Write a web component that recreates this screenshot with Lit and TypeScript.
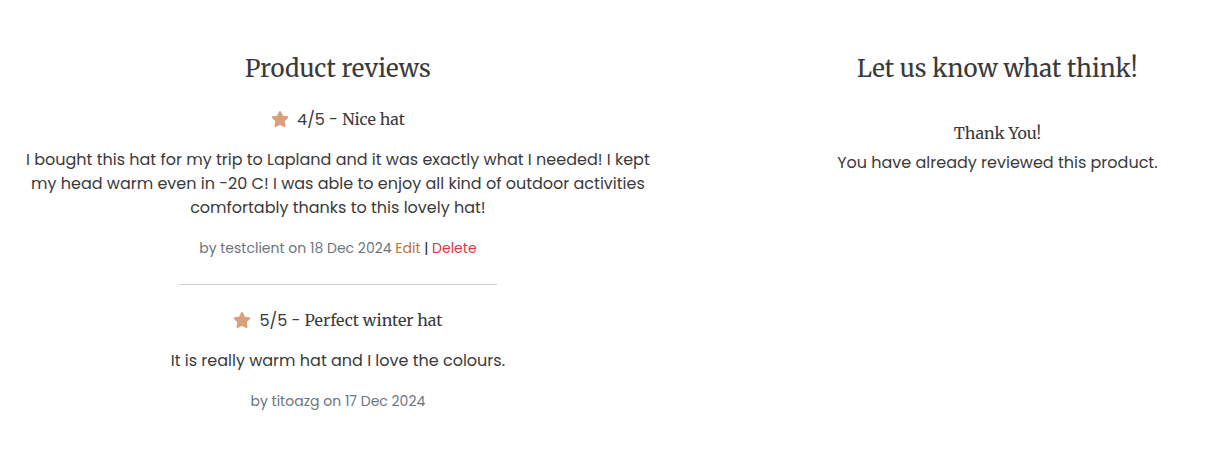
import { LitElement, html, css } from "lit";
import { customElement } from "lit/decorators.js";

interface Review {
  rating: number;
  title: string;
  body: string;
  author: string;
  date: string;
  own: boolean;
}

const reviews: Review[] = [
  {
    rating: 4,
    title: "Nice hat",
    body: "I bought this hat for my trip to Lapland and it was exactly what I needed! I kept my head warm even in -20 C! I was able to enjoy all kind of outdoor activities comfortably thanks to this lovely hat!",
    author: "testclient",
    date: "18 Dec 2024",
    own: true,
  },
  {
    rating: 5,
    title: "Perfect winter hat",
    body: "It is really warm hat and I love the colours.",
    author: "titoazg",
    date: "17 Dec 2024",
    own: false,
  },
];

@customElement("app-root")
export class AppRoot extends LitElement {
  static styles = css`
    :host {
      display: block;
      background: #fff;
      color: #3a3a3a;
      font: 16px/24px Poppins, "Open Sans", sans-serif;
      text-align: center;
    }
    .row {
      display: grid;
      grid-template-columns: 20fr 13fr;
      column-gap: 102px;
      padding: 53px 0 48px;
    }
    .reviews {
      padding: 0 20px;
    }
    h2,
    h3,
    h4,
    p {
      margin: 0;
      font-weight: 400;
    }
    h2,
    h4,
    .title {
      font-family: Merriweather, "Noto Serif", "DejaVu Serif", serif;
    }
    h2 {
      font-size: 24px;
      line-height: 32px;
      margin-bottom: 22px;
    }
    h3 {
      font-size: 16px;
      line-height: 24px;
    }
    h4 {
      font-size: 16px;
      line-height: 24px;
      margin: 36px 0 6px;
    }
    .body {
      margin: 16px 0;
    }
    .meta {
      font-size: 14px;
      color: #6c757d;
    }
    .bar {
      color: #212529;
    }
    a {
      text-decoration: none;
    }
    .edit {
      color: #c07138;
    }
    .delete {
      color: #dc3545;
    }
    svg {
      width: 18px;
      height: 16px;
      margin-right: 4px;
      vertical-align: -2px;
      fill: #d9a07c;
    }
    hr {
      width: 50%;
      border: 0;
      border-top: 1px solid #ccc;
      margin: 24px auto 23px;
    }
  `;

  render() {
    return html`<main class="row">
      <section class="reviews">
        <h2>Product reviews</h2>
        ${reviews.map(
          (r, i) => html`${i ? html`<hr />` : ""}
            <article>
              <h3>
                <svg viewBox="0 0 576 512" aria-hidden="true">
                  <path d="M316.9 18C311.6 7 300.4 0 288.1 0s-23.4 7-28.8 18L195 150.300 51.400 171.500c-12 1.800-22 10.200-25.700 21.700s-.7 24.200 7.900 32.700L137.800 329 113.200 474.700c-2 12 3 24.200 12.900 31.300s23 8 33.800 2.300l128.300-68.500 128.300 68.500c10.800 5.700 23.900 4.900 33.800-2.300s14.900-19.300 12.900-31.300L438.500 329 542.700 225.900c8.600-8.500 11.700-21.200 7.900-32.700s-13.700-19.900-25.700-21.700L381.200 150.300 316.900 18z" />
                </svg>
                ${r.rating}/5 - <span class="title">${r.title}</span>
              </h3>
              <p class="body">${r.body}</p>
              <p class="meta">
                by ${r.author} on ${r.date}
                ${r.own ? html`<a class="edit" href="#edit">Edit</a> <span class="bar">|</span> <a class="delete" href="#delete">Delete</a>` : ""}
              </p>
            </article>`
        )}
      </section>
      <section>
        <h2>Let us know what think!</h2>
        <h4>Thank You!</h4>
        <p>You have already reviewed this product.</p>
      </section>
    </main>`;
  }
}
